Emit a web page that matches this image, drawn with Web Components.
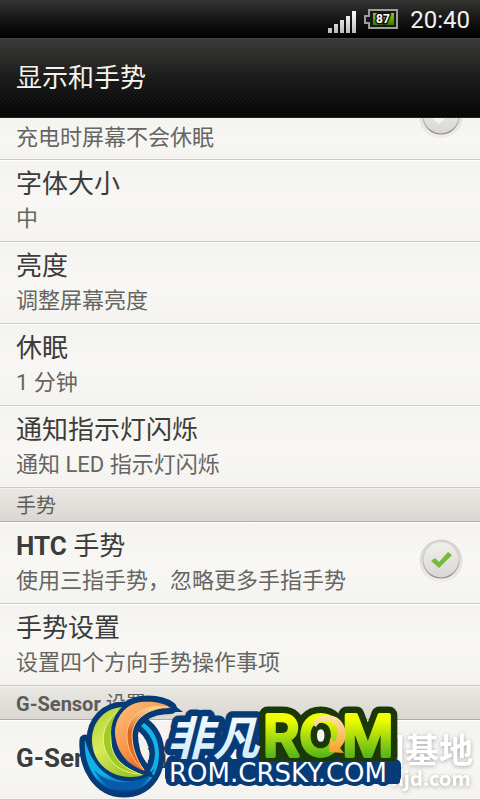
<!DOCTYPE html>
<html lang="zh-CN">
<head>
<meta charset="utf-8">
<meta name="viewport" content="width=device-width">
<title>显示和手势</title>
<style>
html,body{margin:0;background:#f7f6f2}
body{font-family:Roboto,"Noto Sans CJK SC",sans-serif;color:#3f3f3d}
</style>
</head>
<body>
<settings-screen></settings-screen>
<script>
const define=(name,html,init)=>{
  const t=document.createElement('template');t.innerHTML=html;
  customElements.define(name,class extends HTMLElement{
    constructor(){super();this.attachShadow({mode:'open'}).append(t.content.cloneNode(true));}
    connectedCallback(){if(init)init(this,this.shadowRoot);}
  });
};

define('status-bar',`<style>
:host{display:flex;align-items:center;justify-content:flex-end;gap:8px;height:38px;box-sizing:border-box;padding:0 10px 0 0;background:linear-gradient(#353533,#161616 50%,#000);color:#f2f2f2;font-size:24px;line-height:28px}
svg{display:block}
.sig{padding-top:4px}
time{margin-left:4px;padding-top:2px}
text{font:bold 12px Roboto,sans-serif;fill:#fff;stroke:#111;stroke-width:3px;paint-order:stroke}
</style>
<svg class="sig" width="28" height="24" viewBox="0 0 28 24" aria-label="信号"><defs><linearGradient id="s" x2="0" y2="1"><stop stop-color="#fff"/><stop offset="1" stop-color="#bbb"/></linearGradient></defs><g fill="url(#s)"><path d="M0 19h4v5H0zM6 15h4v9H6zM12 11h4v13h-4zM18 7h4v17h-4zM24 2h4v22h-4z"/></g></svg>
<svg width="34" height="20" viewBox="0 0 34 20"><defs><linearGradient id="b" x2="0" y2="1"><stop stop-color="#83cc25"/><stop offset=".5" stop-color="#62a90e"/><stop offset="1" stop-color="#397500"/></linearGradient></defs><path d="M5 1h28v18H5v-5H1V7h4z" fill="#171a12" stroke="#9d9d9d" stroke-width="2"/><path d="M9 4h21v12H9z" fill="url(#b)"/><text x="12" y="14">87</text></svg>
<time>20:40</time>`);

define('title-bar',`<style>
:host{display:flex;align-items:center;height:80px;box-sizing:border-box;padding:0 16px;border-top:1px solid #454543;border-bottom:1px solid #211e1c;background:linear-gradient(135deg,#ffffff0a 25%,#0000 25% 50%,#ffffff0a 50% 75%,#0000 75%) 0 0/4px 4px,linear-gradient(#363634,#171717 50%,#020202)}
h1{margin:0;font-size:26px;line-height:36px;font-weight:400;color:#f5f3ea}
</style><h1><slot></slot></h1>`);

define('round-check',`<style>
:host{display:grid;flex:none;width:44px;height:44px}
input,svg{grid-area:1/1;width:44px;height:44px;margin:0}
input{appearance:none;border-radius:50%}
svg{pointer-events:none}
</style><input type="checkbox" id="c">
<svg viewBox="0 0 44 44"><defs><linearGradient id="r" x2="0" y2="1"><stop stop-color="#d2d0ce"/><stop offset="1" stop-color="#f0efec"/></linearGradient><linearGradient id="k" x2="0" y2="1"><stop stop-color="#f1f0ed"/><stop offset="1" stop-color="#d9d7d4"/></linearGradient><linearGradient id="e" x2="0" y2="1"><stop stop-color="#dddbd8"/><stop offset=".5" stop-color="#c8c6c3"/><stop offset="1" stop-color="#8f8d8b"/></linearGradient></defs>
<circle cx="22" cy="22" r="21.5" fill="url(#r)"/><circle cx="22" cy="21" r="18" fill="url(#k)" stroke="url(#e)" stroke-width="1.2"/>
<path id="t" d="M12 22l4-3 4 4 9-10 4 3-13 13z" fill="#78b83c"/></svg>`,
(h,r)=>{const i=r.querySelector('input');i.checked=h.hasAttribute('checked');i.setAttribute('aria-label',h.getAttribute('label'));
if(!i.checked)r.querySelector('#t').setAttribute('fill','#f4f3f1');});

define('setting-row',`<style>
:host{display:flex;align-items:center;gap:16px;min-height:82px;box-sizing:border-box;padding:0 17px 0 16px;border-top:1px solid #fff;border-bottom:1px solid #cbcac4;background:linear-gradient(135deg,#e7e5e04d 25%,#fff3 25% 50%,#e7e5e04d 50% 75%,#fff3 75%) 0 0/4px 4px,linear-gradient(#f5f4f0,#fbfaf7 50%,#f5f4f0)}
:host([partial]){min-height:42px;align-items:flex-start;overflow:hidden;border-top:0}
::slotted(round-check){margin-bottom:4px}
:host([partial]) ::slotted(round-check){margin-top:-23px}
:host([partial]) .x{padding-top:4px}
:host([partial]) .t{display:none}
:host([single]){min-height:80px;padding-bottom:4px}
.x{flex:1;min-width:0}
.t{font-size:26px;line-height:36px;color:#3c3c3a;font-weight:400}
.s{font-size:22px;line-height:34px;color:#656562}
:host([partial]) .s{line-height:32px}
.s:empty{display:none}
::slotted(b){font-weight:700}
</style><div class="x"><div class="t"><slot></slot></div><div class="s"></div></div><slot name="control"></slot>`,
(h,r)=>{r.querySelector('.s').textContent=h.getAttribute('summary')||'';});

define('section-head',`<style>
:host{display:flex;align-items:center;height:34px;box-sizing:border-box;padding:0 16px;border-top:1px solid #f4f2ee;border-bottom:1px solid #aeaca9;background:linear-gradient(#e9e7e1,#dad7d3)}
h2{margin:0;padding-top:2px;font-size:20px;line-height:28px;font-weight:400;color:#5d5c5a}
::slotted(b){font-weight:700}
</style><h2><slot></slot></h2>`);

define('site-mark',`<style>
:host{display:block;width:408px;height:112px}
svg{display:block;width:408px;height:112px}
text{font-family:"Noto Sans CJK SC",sans-serif}
.w{fill:#fff;font-weight:700;filter:drop-shadow(0 1px 2px #77777799)}
.cn{font-size:46px;font-weight:700;font-style:italic}
.rom{font:500 56px Inter,sans-serif;stroke-linejoin:round}
.url{font:26px "DejaVu Sans",sans-serif;stroke-linejoin:round}
</style>
<svg viewBox="72 688 408 112" aria-label="ROM.CRSKY.COM">
<defs>
<linearGradient id="g" x2="0" y2="1"><stop offset=".25" stop-color="#f2ff00"/><stop offset=".8" stop-color="#57b51b"/></linearGradient>
<linearGradient id="w" x2="0" y2="1"><stop stop-color="#fff"/><stop offset="1" stop-color="#c8e9fb"/></linearGradient>
<linearGradient id="o" x2=".7" y2="1"><stop stop-color="#ffc27b"/><stop offset=".55" stop-color="#f8964a"/><stop offset="1" stop-color="#e94b14"/></linearGradient>
<linearGradient id="o2" x2="0" y2="1"><stop stop-color="#ffd79b"/><stop offset=".4" stop-color="#d8661b"/><stop offset="1" stop-color="#f46b27"/></linearGradient>
<linearGradient id="l" x2=".6" y2="1"><stop stop-color="#a9cf2e"/><stop offset=".5" stop-color="#d9ea5a"/><stop offset="1" stop-color="#9cc826"/></linearGradient>
<linearGradient id="c" x2="0" y2="1"><stop stop-color="#16b4e8"/><stop offset=".75" stop-color="#0eb1e5"/><stop offset="1" stop-color="#063f96"/></linearGradient>
<linearGradient id="y" x2="0" y2="1"><stop stop-color="#ffe2b0"/><stop offset="1" stop-color="#f4a120"/></linearGradient>
<path id="ring" d="M85 740C83 766 98 792 124 792C146 792 159 775 159 754C159 740 153 729 144 723L141 726C150 734 155 742 155 754C154 769 147 778 134 781C112 784 92 768 85 740Z"/>
<path id="green" d="M124 707C106 707 92 721 92 740C92 761 108 777 131 777C137 777 142 776 145 774C125 770 112 759 111 742C110 726 116 714 124 707Z"/>
<path id="orange" d="M171 708C163 702 151 701 141 702C125 704 115 718 115 733C116 752 128 766 145 771C136 759 132 747 132 735C133 719 148 708 171 708Z"/>
</defs>
<text class="w" x="371" y="763" font-size="34">国基地</text>
<text class="w" x="391" y="786" font-size="20">njd.com</text>
<g fill="#073b78" stroke="#073b78" stroke-linejoin="round">
<use href="#ring" stroke-width="11"/><use href="#green" stroke-width="11"/><use href="#orange" stroke-width="12"/>
<text class="cn" x="167" y="755" stroke-width="13">非凡</text>
<text class="url" x="169" y="781" stroke-width="10">ROM.CRSKY.COM</text>
<rect x="168" y="762" width="230" height="18" rx="3" stroke-width="6"/></g>
<use href="#ring" fill="url(#c)"/>
<path d="M94 770C109 786 137 787 155 768C148 782 139 790 124 790C111 790 101 783 94 770Z" fill="#075baa"/>
<use href="#green" fill="url(#l)" stroke="#073b78" stroke-width="6" paint-order="stroke"/>
<path d="M121 709C104 721 99 738 107 754C113 767 126 774 141 774C122 768 111 756 111 740C111 727 115 716 121 709Z" fill="#a4ca26" stroke="#e9f197"/>
<use href="#orange" fill="url(#o)" stroke="#073b78" stroke-width="8" paint-order="stroke"/>
<path d="M168 707C145 703 129 715 127 732C126 749 134 763 144 770C136 759 132 747 132 735C133 719 148 708 168 707Z" fill="url(#o2)" stroke="#ffc88b"/>
<path d="M140 738C145 741 149 748 149 754C149 758 148 761 147 763C141 756 138 747 140 738Z" fill="#f3f2ed"/>
<text class="rom" x="263" y="756" fill="#1b3907" stroke="#1b3907" stroke-width="17">ROM</text>
<text class="cn" x="167" y="755" fill="url(#w)">非凡</text>
<text class="rom" x="263" y="756" fill="url(#g)" stroke="url(#g)" stroke-width="4">ROM</text>
<path d="M312 724C319 713 336 712 343 724C348 733 346 742 340 748L344 753L329 752L330 738L334 742C339 736 339 728 333 723C327 719 320 720 316 727Z" fill="url(#y)"/>
<rect x="166" y="761" width="234" height="23" rx="3" fill="#073b78"/>
<text class="url" x="169" y="782" fill="#fff">ROM.CRSKY.COM</text>
</svg>`);

define('settings-screen',`<style>
:host{display:block;position:relative;overflow:hidden}
site-mark{position:absolute;right:0;bottom:0}
</style>
<status-bar></status-bar><title-bar>显示和手势</title-bar>
<main>
<setting-row partial summary="充电时屏幕不会休眠"><round-check slot="control" label="充电时屏幕不会休眠"></round-check></setting-row>
<setting-row summary="中">字体大小</setting-row>
<setting-row summary="调整屏幕亮度">亮度</setting-row>
<setting-row summary="1 分钟">休眠</setting-row>
<setting-row summary="通知 LED 指示灯闪烁">通知指示灯闪烁</setting-row>
<section-head>手势</section-head>
<setting-row summary="使用三指手势，忽略更多手指手势"><b>HTC</b> 手势<round-check slot="control" checked label="HTC 手势"></round-check></setting-row>
<setting-row summary="设置四个方向手势操作事项">手势设置</setting-row>
<section-head><b>G-Sensor</b> 设置</section-head>
<setting-row single><b>G-Sensor</b> 校正</setting-row>
</main>
<site-mark></site-mark>`);
</script>
</body>
</html>
